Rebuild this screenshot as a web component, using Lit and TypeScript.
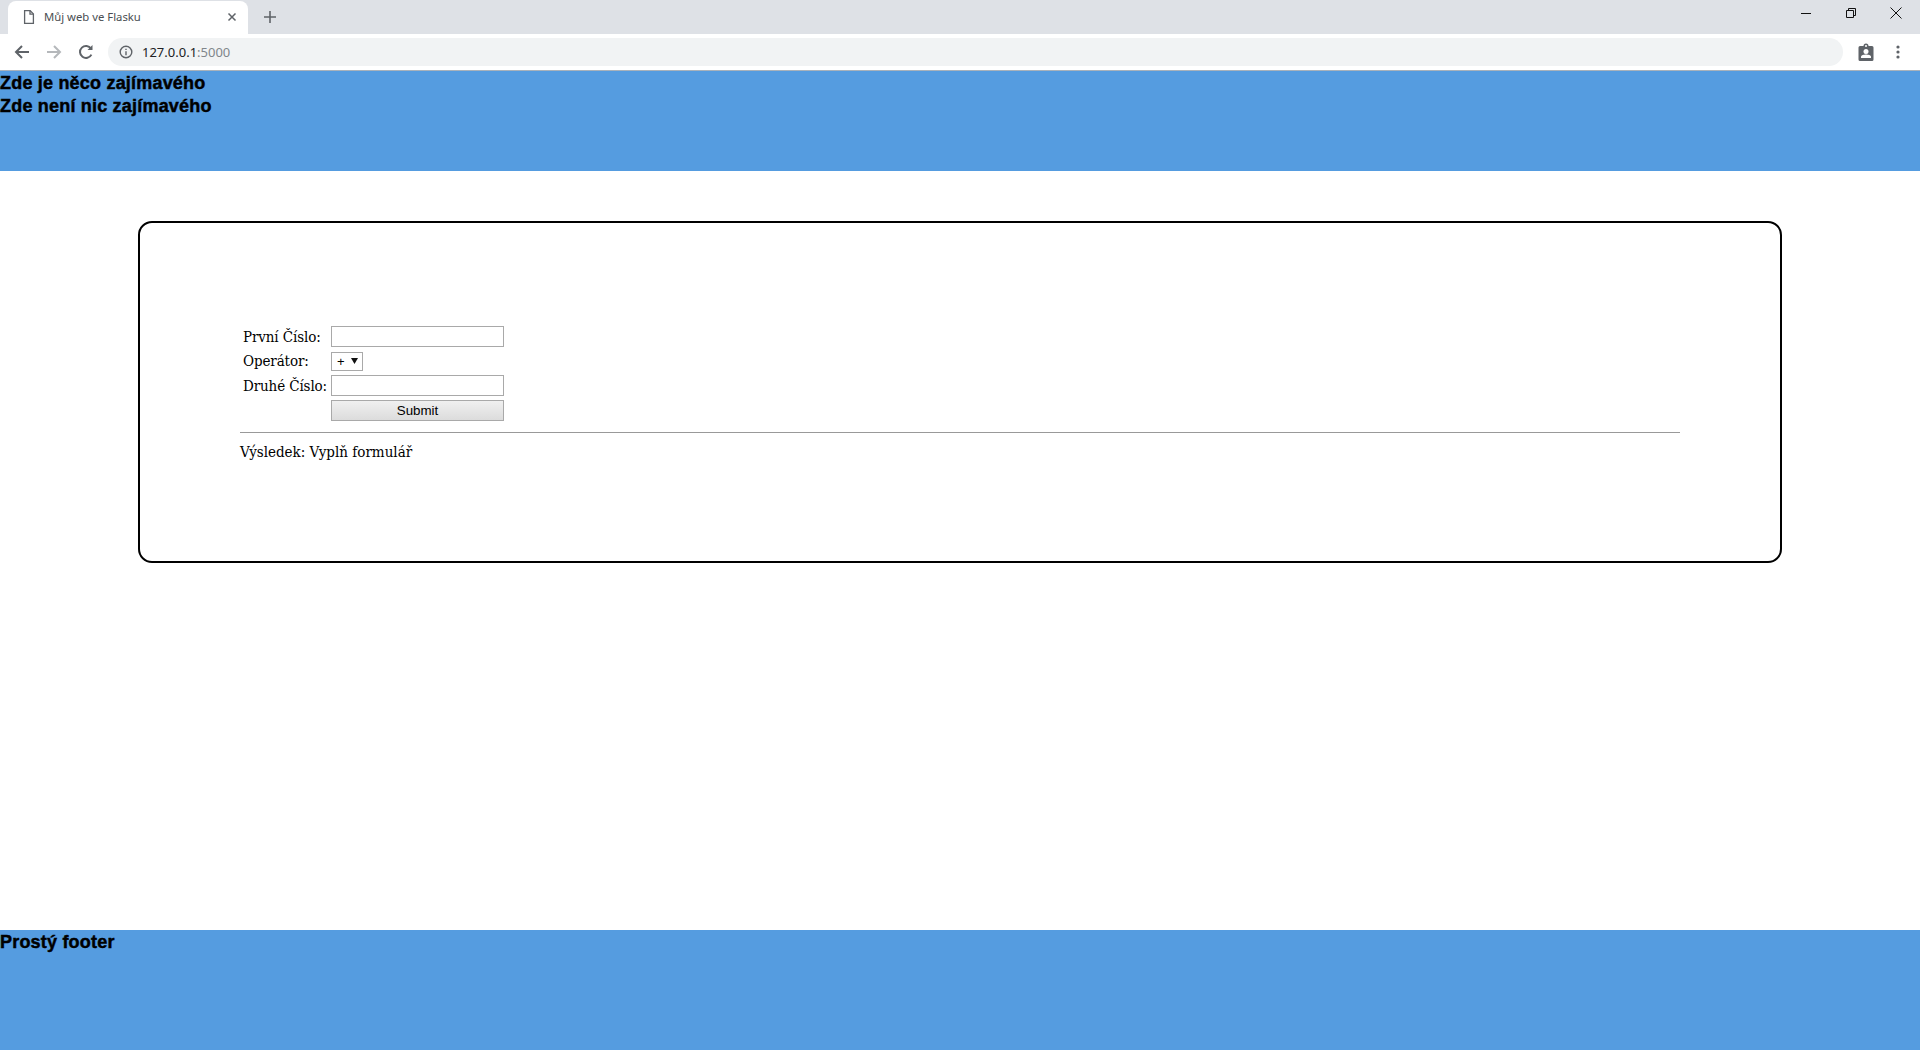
import { LitElement, html, css } from "lit";
import { customElement } from "lit/decorators.js";

@customElement("app-root")
export class AppRoot extends LitElement {
  static styles = css`
    :host { display: flex; flex-direction: column; height: 1050px; background: #fff; overflow: hidden; color: #000; }
    .tabstrip { height: 34px; background: #dee1e6; display: flex; align-items: flex-end; flex: none; }
    .tab { margin-left: 8px; width: 240px; height: 33px; background: #fff; border-radius: 8px 8px 0 0; display: flex; align-items: center; box-sizing: border-box; padding: 0 8px 2px 13px; flex: none; }
    .tab-title { font: 11.3px "Noto Sans", sans-serif; color: #4a4e52; margin-left: 7px; flex: 1; white-space: nowrap; }
    .tab svg { display: block; flex: none; }
    .newtab { margin-left: 14px; margin-bottom: 9px; display: block; flex: none; }
    .spacer { flex: 1; }
    .winctl { display: flex; align-self: flex-start; margin-top: 7px; margin-right: 18px; gap: 33px; align-items: center; }
    .winctl svg { display: block; }
    .toolbar { height: 37px; background: #fff; border-bottom: 1px solid #a9b2bb; box-sizing: border-box; display: flex; align-items: center; flex: none; padding-left: 14px; }
    .toolbar svg { display: block; flex: none; }
    .nav { display: flex; gap: 16px; align-items: center; }
    .omni { margin-left: 14px; width: 1735px; height: 28px; border-radius: 14px; background: #f1f3f4; display: flex; align-items: center; padding-left: 11px; box-sizing: border-box; flex: none; }
    .url { font: 13px "Noto Sans", sans-serif; color: #202124; margin-left: 9px; }
    .url span { color: #80868b; }
    .end { display: flex; align-items: center; margin-left: 15px; gap: 22px; }
    .hdr { height: 100px; flex: none; background: #559ce0; font: bold 18px/23px "Liberation Sans", sans-serif; padding-top: 1px; box-sizing: border-box; letter-spacing: 0.2px; -webkit-text-stroke: 0.45px #000; }
    main { flex: 1; padding: 50px 138px 0; box-sizing: border-box; }
    .card { height: 342px; border: 2px solid #000; border-radius: 14px; box-sizing: border-box; padding: 103px 100px 0; font: 15px/18px "DejaVu Serif", serif; font-stretch: condensed; }
    .form { display: grid; grid-template-columns: 88px 173px; grid-template-rows: 21px 20px 21px 21px; row-gap: 4px; margin-left: 3px; align-items: center; }
    .lbl { white-space: nowrap; letter-spacing: -0.12px; }
    input { width: 173px; height: 21px; box-sizing: border-box; border: 1px solid #a9a9a9; padding: 0; margin: 0; background: #fff; display: block; }
    .sel { width: 32px; height: 19px; box-sizing: border-box; border: 1px solid #a9a9a9; background: #fff; font: 13px/17px "Liberation Sans", sans-serif; align-self: end; display: flex; align-items: center; padding-left: 5px; gap: 6px; }
    .sel svg { display: block; margin-top: -2px; }
    button { width: 173px; height: 21px; box-sizing: border-box; border: 1px solid #a9a9a9; background: linear-gradient(#f0f0f0, #dcdcdc); font: 13.33px "Liberation Sans", sans-serif; color: #000; padding: 0; margin: 0; display: block; }
    hr { margin: 11px 0 0; border: 0; border-top: 1px solid #999; height: 0; }
    .res { margin-top: 10px; white-space: nowrap; }
    .ftr { height: 120px; flex: none; background: #559ce0; font: bold 18px/23px "Liberation Sans", sans-serif; letter-spacing: 0.2px; -webkit-text-stroke: 0.45px #000; padding-top: 1px; box-sizing: border-box; }
  `;

  render() {
    return html`
      <div class="tabstrip">
        <div class="tab">
          <svg width="16" height="16" viewBox="0 0 16 16" fill="none" stroke="#5f6368" stroke-width="1.3"><path d="M3.6 1.7h5.6l3.2 3.2v9.4H3.6z"/><path d="M9 1.7v3.4h3.4"/></svg>
          <span class="tab-title">Můj web ve Flasku</span>
          <svg width="16" height="16" viewBox="0 0 16 16" stroke="#5f6368" stroke-width="1.5"><path d="M4.5 4.5l7 7M11.5 4.5l-7 7"/></svg>
        </div>
        <svg class="newtab" width="16" height="16" viewBox="0 0 16 16" stroke="#5f6368" stroke-width="1.6"><path d="M8 2v12M2 8h12"/></svg>
        <div class="spacer"></div>
        <div class="winctl">
          <svg width="12" height="12" viewBox="0 0 12 12" stroke="#111" stroke-width="1"><path d="M1 6.5h10"/></svg>
          <svg width="12" height="12" viewBox="0 0 12 12" fill="none" stroke="#111" stroke-width="1"><path d="M1.5 3.5h7v7h-7zM3.5 3.5v-2h7v7h-2"/></svg>
          <svg width="12" height="12" viewBox="0 0 12 12" stroke="#111" stroke-width="1"><path d="M.5.5l11 11M11.5.5l-11 11"/></svg>
        </div>
      </div>
      <div class="toolbar">
        <div class="nav">
          <svg width="16" height="16" viewBox="0 0 16 16" fill="none" stroke="#5f6368" stroke-width="2"><path d="M15 8H2M8 2L2 8l6 6"/></svg>
          <svg width="16" height="16" viewBox="0 0 16 16" fill="none" stroke="#b5b8bb" stroke-width="2"><path d="M1 8h13M8 2l6 6-6 6"/></svg>
          <svg width="16" height="16" viewBox="0 0 16 16" fill="none" stroke="#5f6368" stroke-width="2"><path d="M13.4 10.6A6 6 0 1 1 13 4.6"/><path d="M14.5 1v5h-5z" fill="#5f6368" stroke="none"/></svg>
        </div>
        <div class="omni">
          <svg width="14" height="14" viewBox="0 0 14 14" fill="none" stroke="#5f6368" stroke-width="1.4"><circle cx="7" cy="7" r="5.8"/><path d="M7 6.2v4M7 3.7v1.4"/></svg>
          <span class="url">127.0.0.1<span>:5000</span></span>
        </div>
        <div class="end">
          <svg width="16" height="18" viewBox="0 0 16 18"><path d="M2 3h3.5a2.5 2.5 0 0 1 5 0H14a1.5 1.5 0 0 1 1.5 1.5v12A1.5 1.5 0 0 1 14 18H2a1.5 1.5 0 0 1-1.500-1.500v-12A1.500 1.500 0 0 1 2 3z" fill="#5f6368"/><circle cx="8" cy="3" r="1" fill="#fff"/><circle cx="8" cy="8.500" r="2.500" fill="#fff"/><path d="M3 15v-1.200c0-1.600 3.200-2.300 5-2.300s5 .7 5 2.300V15z" fill="#fff"/></svg>
          <svg width="4" height="14" viewBox="0 0 4 14" fill="#5f6368"><circle cx="2" cy="2" r="1.600"/><circle cx="2" cy="7" r="1.600"/><circle cx="2" cy="12" r="1.600"/></svg>
        </div>
      </div>
      <header class="hdr">
        <div>Zde je něco zajímavého</div>
        <div>Zde není nic zajímavého</div>
      </header>
      <main>
        <div class="card">
          <div class="form">
            <div class="lbl">První Číslo:</div><input type="text" />
            <div class="lbl">Operátor:</div>
            <div class="sel"><span>+</span><svg width="7" height="6" viewBox="0 0 7 6" fill="#111"><path d="M0 0h7L3.500 6z"/></svg></div>
            <div class="lbl">Druhé Číslo:</div><input type="text" />
            <div></div><button>Submit</button>
          </div>
          <hr />
          <div class="res">Výsledek: Vyplň formulář</div>
        </div>
      </main>
      <footer class="ftr">Prostý footer</footer>
    `;
  }
}
